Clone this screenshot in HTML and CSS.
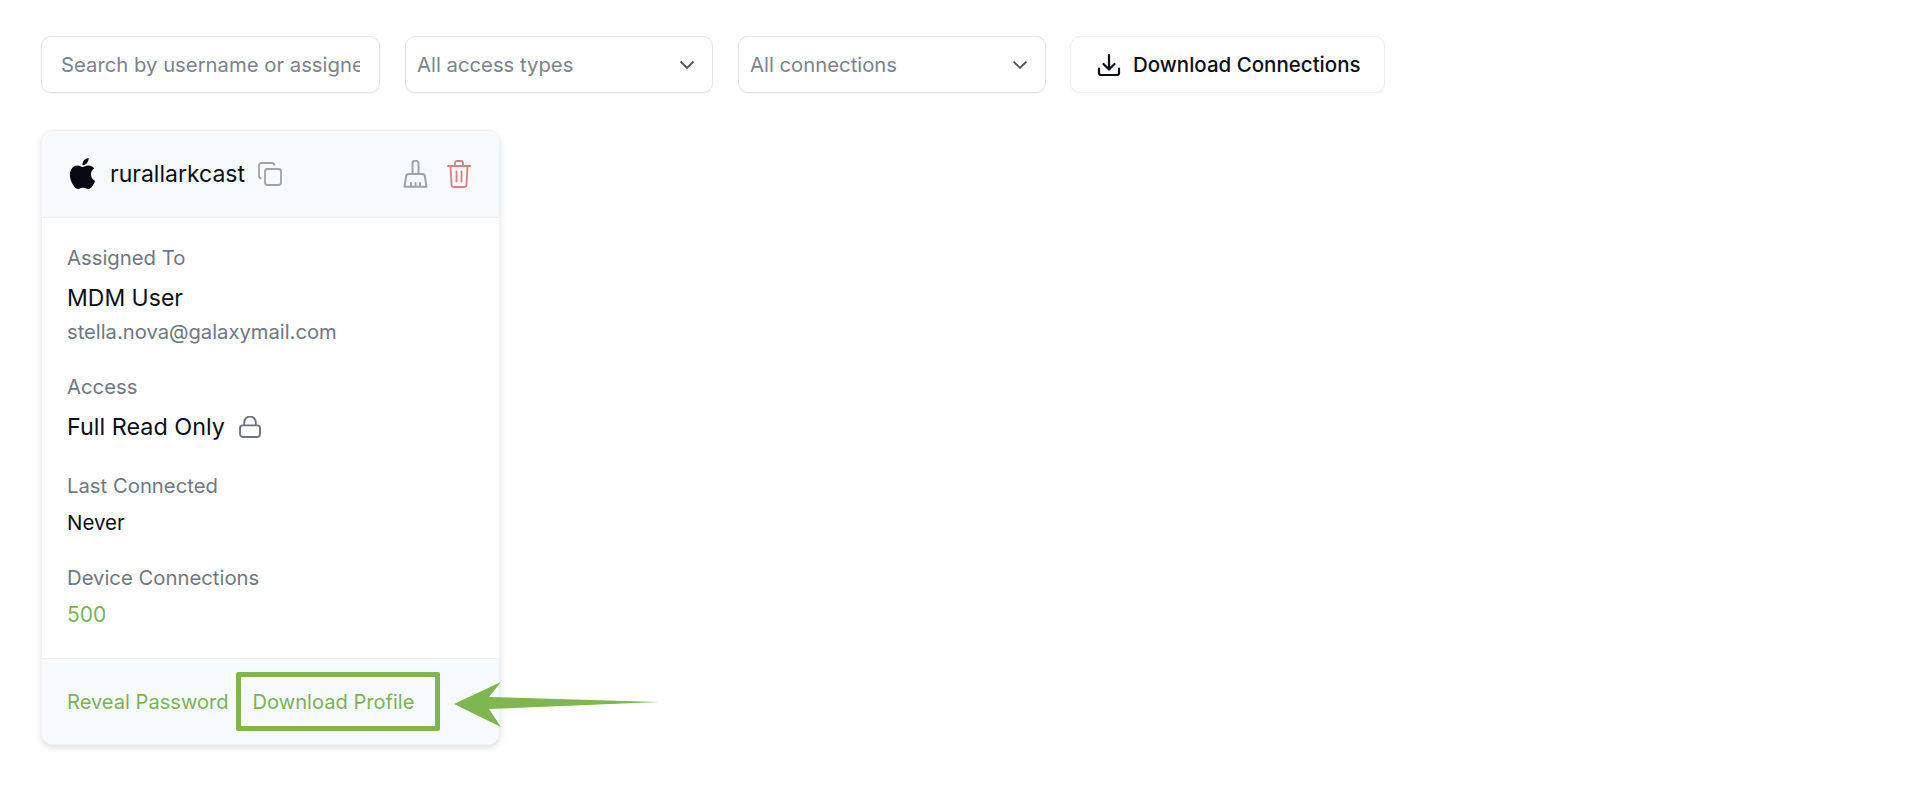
FILE: index.html
```html
<!DOCTYPE html>
<html lang="en">
<head>
<meta charset="utf-8">
<title>Connections</title>
<link rel="stylesheet" href="styles.css">
</head>
<body>
<div class="filters">
  <input class="search" type="text" placeholder="Search by username or assignee">
  <div class="select"><span>All access types</span>
    <svg class="chev" viewBox="0 0 16 16"><path d="M1.5 4.5 8 11l6.5-6.5"/></svg></div>
  <div class="select"><span>All connections</span>
    <svg class="chev" viewBox="0 0 16 16"><path d="M1.5 4.5 8 11l6.5-6.5"/></svg></div>
  <button class="btn">
    <svg class="btn-ico" viewBox="0 0 24 24"><path d="M12 2v14M6.5 11l5.5 5.5 5.500-5.500M2 15.500v4.500a2 2 0 0 0 2 2h16a2 2 0 0 0 2-2v-4.500"/></svg>
    Download Connections
  </button>
</div>

<div class="card">
  <header class="card-head">
    <svg class="apple" viewBox="0 0 24 24"><path d="M12.152 6.896c-.948 0-2.415-1.078-3.96-1.04-2.04.027-3.91 1.183-4.961 3.014-2.117 3.675-.546 9.103 1.519 12.09 1.013 1.454 2.208 3.09 3.792 3.039 1.52-.065 2.09-.987 3.935-.987 1.831 0 2.35.987 3.96.948 1.637-.026 2.676-1.48 3.676-2.948 1.156-1.688 1.636-3.325 1.662-3.415-.039-.013-3.182-1.221-3.22-4.857-.026-3.04 2.48-4.494 2.597-4.559-1.429-2.09-3.623-2.324-4.39-2.376-2-.156-3.675 1.09-4.61 1.09zM15.53 3.83c.843-1.012 1.4-2.427 1.245-3.83-1.207.052-2.662.805-3.532 1.818-.78.896-1.454 2.338-1.273 3.714 1.338.104 2.715-.688 3.559-1.701"/></svg>
    <span class="name">rurallarkcast</span>
    <svg class="copy" viewBox="0 0 24 24"><rect x="7" y="7" width="16" height="16" rx="2.500"/><path d="M3.500 16.500A2.500 2.500 0 0 1 1 14V3.500A2.500 2.500 0 0 1 3.500 1H14a2.500 2.500 0 0 1 2.500 2.500"/></svg>
    <span class="spacer"></span>
    <svg class="broom" viewBox="0 0 25 28"><path d="M9.500 14V3.500a3 3 0 0 1 6 0V14M6 14h13a3 3 0 0 1 3 3l1.500 9.800H1.500L3 17a3 3 0 0 1 3-3ZM8 23v3.500M12.500 23v3.500M17 23v3.500"/></svg>
    <svg class="trash" viewBox="0 0 24 28"><path d="M1 6h22M8 6V3a2 2 0 0 1 2-2h4a2 2 0 0 1 2 2v3M3.500 6l1 18.500a2.500 2.500 0 0 0 2.500 2.500h10a2.500 2.500 0 0 0 2.500-2.500l1-18.500M9.500 11.500v10M14.500 11.500v10"/></svg>
  </header>
  <div class="card-body">
    <section class="field">
      <div class="label">Assigned To</div>
      <div class="value big">MDM User</div>
      <div class="sub">stella.nova@galaxymail.com</div>
    </section>
    <section class="field">
      <div class="label">Access</div>
      <div class="value big row">Full Read Only
        <svg class="lock" viewBox="0 0 21 21"><rect x="1" y="9" width="19" height="11" rx="2.500"/><path d="M5 9V6a5.500 5.500 0 0 1 11 0v3"/></svg>
      </div>
    </section>
    <section class="field">
      <div class="label">Last Connected</div>
      <div class="value">Never</div>
    </section>
    <section class="field">
      <div class="label">Device Connections</div>
      <div class="value green">500</div>
    </section>
  </div>
  <footer class="card-foot">
    <a class="link">Reveal Password</a>
    <a class="link">Download Profile</a>
  </footer>
  <div class="highlight"></div>
</div>
<svg class="arrow" viewBox="0 0 206 46"><polygon points="0,22 47,0 35,15 205,20 35,27 47,45"/></svg>
</body>
</html>
```
FILE: styles.css
```css
* { box-sizing: border-box; }
html, body { margin: 0; background: #fff; }
body {
  padding: 36px 41px 0;
  font-family: Inter, "Liberation Sans", sans-serif;
  color: #0b0f19;
  font-size: 20px;
  height: 789px;
  overflow: hidden;
  position: relative;
}
.filters { display: flex; gap: 25px; height: 57px; }
.search, .select, .btn {
  height: 57px;
  background: #fff;
  border: 1.500px solid #e2e4e8;
  border-radius: 10px;
  font-family: inherit;
  font-size: 20.300px;
  box-shadow: 0 1px 2px rgba(0,0,0,.05);
}
.search {
  width: 339px;
  padding: 0 19px;
  color: #6b7280;
  outline: none;
}
.search::placeholder { color: #7b828d; opacity: 1; }
.select {
  width: 308px;
  padding: 0 17px 0 11px;
  display: flex;
  align-items: center;
  justify-content: space-between;
  color: #7b828d;
}
.chev { width: 16px; height: 16px; fill: none; stroke: #4b5563; stroke-width: 1.800; }
.btn {
  width: 315px;
  margin-left: -1px;
  display: flex;
  align-items: center;
  gap: 12px;
  padding: 0 0 0 26px;
  color: #0b0f19;
  font-size: 20.500px;
  font-weight: 450;
  border-color: #eceef1;
}
.btn-ico { width: 24px; height: 24px; fill: none; stroke: #0b0f19; stroke-width: 2.200; stroke-linecap: round; stroke-linejoin: round; }

.card {
  position: relative;
  width: 459px;
  margin-top: 37px;
  border: 1px solid #eef0f3;
  border-radius: 12px;
  box-shadow: 0 3px 7px rgba(0,0,0,.12);
  background: #fff;
}
.card-head {
  height: 87px;
  display: flex;
  align-items: center;
  padding: 0 28px 0 26px;
  background: #f7fafc;
  border-bottom: 1px solid #eef0f3;
  border-radius: 12px 12px 0 0;
}
.apple { width: 31px; height: 31px; fill: #050914; margin-right: 12px; margin-left: -1px; margin-top: -2px; }
.name { font-size: 23px; font-weight: 400; }
.copy { width: 24px; height: 24px; margin-left: 13px; fill: none; stroke: #9ca3af; stroke-width: 1.800; }
.spacer { flex: 1; }
.broom { width: 25px; height: 28px; fill: none; stroke: #9ca3af; stroke-width: 2; stroke-linejoin: round; stroke-linecap: round; }
.trash { width: 24px; height: 28px; margin-left: 19px; fill: none; stroke: #d9807f; stroke-width: 1.800; stroke-linejoin: round; stroke-linecap: round; }

.card-body { height: 440px; padding: 26px 25px 0; display: flex; flex-direction: column; gap: 27px; }
.label { line-height: 28px; color: #6f7782; font-size: 20.300px; }
.value { margin-top: 9px; line-height: 28px; font-size: 20.500px; }
.value.big { margin-top: 11px; line-height: 30px; font-size: 23px; font-weight: 400; }
.value.row { margin-top: 11px; margin-bottom: 3px; display: flex; align-items: center; gap: 14px; height: 30px; font-size: 23.400px; }
.sub { margin-top: 5px; line-height: 28px; color: #6f7782; font-size: 20.200px; }
.green { color: #7ab356; font-size: 21px; }
.lock { width: 22px; height: 22px; fill: none; stroke: #6b7280; stroke-width: 1.800; }

.card-foot {
  height: 86px;
  display: flex;
  align-items: center;
  gap: 24px;
  padding: 0 25px;
  background: #f7fafc;
  border-top: 1px solid #eef0f3;
  border-radius: 0 0 12px 12px;
}
.link { color: #7ab356; font-size: 20.100px; }

.highlight {
  position: absolute;
  left: 194px;
  bottom: 13px;
  width: 204px;
  height: 59px;
  border: 5px solid #7fb650;
  border-radius: 2px;
}
.arrow {
  position: absolute;
  left: 454px;
  top: 682px;
  width: 206px;
  height: 46px;
  fill: #7fb650;
}
```
